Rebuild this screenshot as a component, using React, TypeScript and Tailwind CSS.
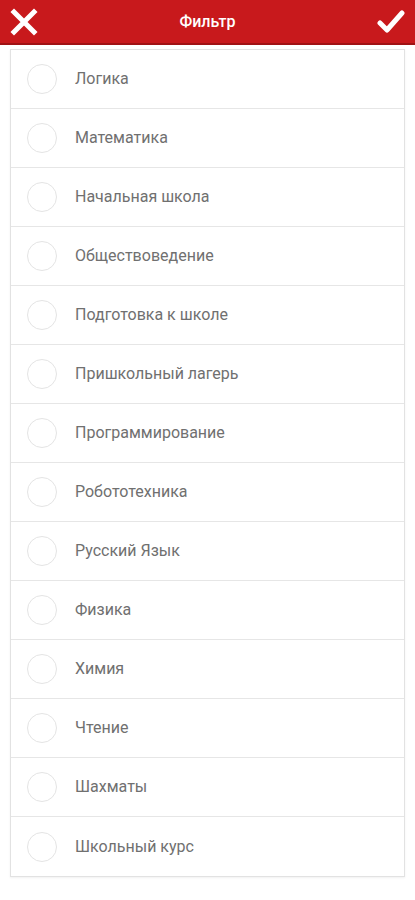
const ITEMS = [
  'Логика',
  'Математика',
  'Начальная школа',
  'Обществоведение',
  'Подготовка к школе',
  'Пришкольный лагерь',
  'Программирование',
  'Робототехника',
  'Русский Язык',
  'Физика',
  'Химия',
  'Чтение',
  'Шахматы',
  'Школьный курс',
]

function CloseIcon() {
  return (
    <svg width="28" height="28" viewBox="0 0 28 28">
      <path d="M4 4 L24 24 M24 4 L4 24" stroke="white" strokeWidth="5" strokeLinecap="square" />
    </svg>
  )
}

function CheckIcon() {
  return (
    <svg width="28" height="26" viewBox="0 0 28 26">
      <path d="M3 14 L10 21 L25 4" stroke="white" strokeWidth="5" fill="none" strokeLinecap="round" strokeLinejoin="round" />
    </svg>
  )
}

export default function App() {
  return (
    <div className="min-h-[900px] bg-white" style={{ fontFamily: 'Roboto, "Noto Sans", sans-serif' }}>
      <header className="h-[45px] bg-[#c8191c] border-b-2 border-[#a01214] flex items-center justify-between px-[10px]">
        <CloseIcon />
        <span className="text-white text-[16px] font-medium">Фильтр</span>
        <CheckIcon />
      </header>
      <div className="mt-[4px] mx-[10px] border border-[#e2e2e2] shadow-[0_1px_2px_rgba(0,0,0,0.06)]">
        {ITEMS.map((item, i) => (
          <div
            key={item}
            className={`h-[59px] flex items-center pl-[16px] ${i < ITEMS.length - 1 ? 'border-b border-[#e6e6e6]' : ''}`}
          >
            <div className="w-[30px] h-[30px] rounded-full border border-[#e4e4e4] shrink-0" />
            <span className="ml-[18px] text-[16px] text-[#707070]">{item}</span>
          </div>
        ))}
      </div>
    </div>
  )
}
